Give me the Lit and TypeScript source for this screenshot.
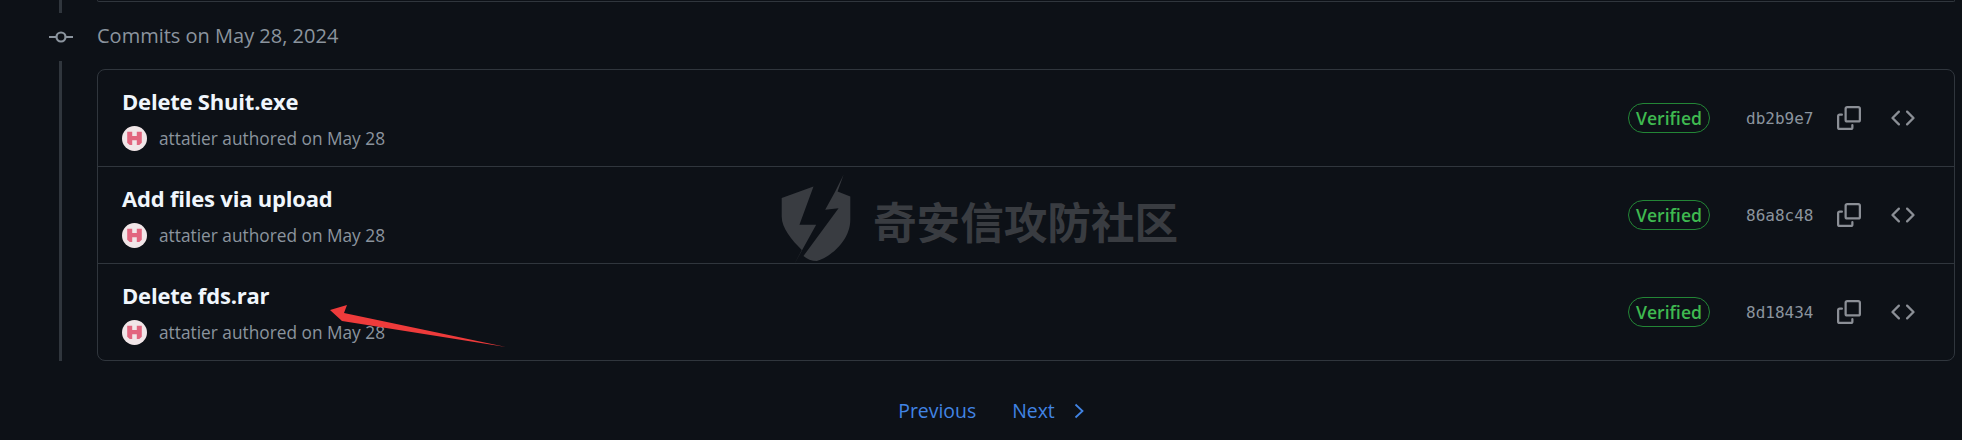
import { LitElement, html, css, svg } from "lit";
import { customElement } from "lit/decorators.js";

const commits = [
  { title: "Delete Shuit.exe", sha: "db2b9e7" },
  { title: "Add files via upload", sha: "86a8c48" },
  { title: "Delete fds.rar", sha: "8d18434" },
];

const avatar = html`<svg class="avatar" viewBox="0 0 24 24" width="25" height="25">
  <circle cx="12" cy="12" r="12" fill="#f1e6e8"/>
  <path d="M5 5.500h4.800v4h4.400v-4H19v10.500l-2.400 2.200h-2.400v-4.600H9.800v4.600H7.400L5 16z" fill="#e2667f"/>
</svg>`;

const copyIcon = html`<svg class="ic" viewBox="0 0 16 16" width="24" height="24" fill="#8b8f96">
  <path d="M0 6.750C0 5.784.784 5 1.750 5h1.500a.75.75 0 0 1 0 1.500h-1.500a.25.25 0 0 0-.25.25v7.500c0 .138.112.25.25.25h7.500a.25.25 0 0 0 .25-.25v-1.500a.75.75 0 0 1 1.500 0v1.500A1.750 1.750 0 0 1 9.250 16h-7.500A1.750 1.750 0 0 1 0 14.250Z"/>
  <path d="M5 1.750C5 .784 5.784 0 6.750 0h7.500C15.216 0 16 .784 16 1.750v7.500A1.750 1.750 0 0 1 14.250 11h-7.500A1.750 1.750 0 0 1 5 9.250Zm1.750-.25a.25.25 0 0 0-.25.25v7.500c0 .138.112.25.25.25h7.500a.25.25 0 0 0 .25-.25v-7.500a.25.25 0 0 0-.25-.25Z"/>
</svg>`;

const codeIcon = html`<svg class="ic" viewBox="0 0 16 16" width="24" height="24" fill="#8b8f96">
  <path d="m11.280 3.220 4.250 4.250a.75.75 0 0 1 0 1.060l-4.250 4.250a.749.749 0 0 1-1.275-.326.749.749 0 0 1 .215-.734L13.940 8l-3.720-3.720a.749.749 0 0 1 .326-1.275.749.749 0 0 1 .734.215Zm-6.560 0a.751.751 0 0 1 1.042.018.751.751 0 0 1 .018 1.042L2.060 8l3.720 3.720a.749.749 0 0 1-.326 1.275.749.749 0 0 1-.734-.215L.470 8.530a.75.75 0 0 1 0-1.060Z"/>
</svg>`;

@customElement("app-root")
export class AppRoot extends LitElement {
  static styles = css`
    :host {
      display: block;
      width: 1962px;
      height: 440px;
      background: #0d1117;
      font-family: "Open Sans", "Noto Sans", sans-serif;
      position: relative;
      overflow: hidden;
    }
    .timeline {
      display: grid;
      grid-template-columns: 59px 3px 35px 1fr;
      grid-template-rows: 13px 48px 8px 292px;
      margin-right: 7px;
    }
    .prev-box {
      grid-column: 4;
      grid-row: 1;
      height: 1px;
      border: 1px solid #30363d;
      border-top: none;
      border-radius: 0 0 6px 6px;
    }
    .line {
      grid-column: 2;
      background: #30363d;
    }
    .l1 { grid-row: 1; }
    .l2 { grid-row: 3 / 5; }
    .head {
      grid-column: 1 / 5;
      grid-row: 2;
      display: flex;
      align-items: center;
    }
    .node {
      width: 97px;
      flex: none;
      box-sizing: border-box;
      padding-left: 49px;
    }
    .node svg { display: block; }
    .date {
      font-size: 20px;
      line-height: 26px;
      padding-bottom: 2px;
      color: #8b949e;
    }
    .box {
      grid-column: 4;
      grid-row: 4;
      border: 1px solid #30363d;
      border-radius: 8px;
      display: flex;
      flex-direction: column;
    }
    .row {
      flex: 1;
      display: flex;
      align-items: center;
      justify-content: space-between;
      padding: 0 39px 0 24px;
      border-top: 1px solid #30363d;
    }
    .row:first-child { border-top: none; }
    .info { padding-top: 3px; }
    .title {
      font-size: 22px;
      font-weight: 700;
      color: #f0f6fc;
      line-height: 27px;
      letter-spacing: -0.2px;
    }
    .meta {
      display: flex;
      align-items: center;
      gap: 12px;
      margin-top: 11px;
      font-size: 17.300px;
      color: #8b949e;
      line-height: 25px;
    }
    .avatar { display: block; flex: none; }
    .right { display: flex; align-items: center; }
    .badge {
      box-sizing: border-box;
      width: 82px;
      height: 30px;
      border: 1px solid #238636;
      border-radius: 15px;
      color: #3fb950;
      font-size: 17.600px;
      font-weight: 600;
      display: flex;
      align-items: center;
      justify-content: center;
    }
    .sha {
      font-family: "DejaVu Sans Mono", "Liberation Mono", monospace;
      font-size: 16px;
      color: #8b949e;
      width: 68px;
      margin-left: 36px;
      white-space: nowrap;
    }
    .ic { display: block; flex: none; }
    .copy { margin-left: 23px; }
    .code { margin-left: 30px; }
    .pager {
      display: flex;
      justify-content: center;
      align-items: center;
      margin-top: 35px;
      padding-left: 20px;
      font-size: 19.400px;
      color: #4184e4;
      line-height: 30px;
    }
    .next { margin-left: 36px; }
    .chev { margin-left: 19px; display: block; }
    .wm {
      position: absolute;
      left: 780px;
      top: 173px;
      display: flex;
      align-items: center;
      gap: 21px;
      pointer-events: none;
    }
    .shield { display: block; }
    .wm-text {
      font-family: "Noto Sans CJK SC", sans-serif;
      font-size: 43.600px;
      font-weight: 700;
      line-height: 60px;
      color: #393c41;
      white-space: nowrap;
      margin-top: 2px;
    }
    .arrow {
      position: absolute;
      left: 325px;
      top: 300px;
      pointer-events: none;
    }
  `;

  render() {
    return html`
      <div class="timeline">
        <div class="prev-box"></div>
        <div class="line l1"></div>
        <div class="head">
          <div class="node">
            <svg viewBox="0 0 24 24" width="24" height="24" fill="none" stroke="#8b949e" stroke-width="2.200">
              <circle cx="12" cy="12" r="4.500"/>
              <path d="M0 12h7.500M16.500 12H24"/>
            </svg>
          </div>
          <div class="date">Commits on May 28, 2024</div>
        </div>
        <div class="line l2"></div>
        <div class="box">
          ${commits.map(
            (c) => html`<div class="row">
              <div class="info">
                <div class="title">${c.title}</div>
                <div class="meta">${avatar}<span>attatier authored on May 28</span></div>
              </div>
              <div class="right">
                <div class="badge">Verified</div>
                <div class="sha">${c.sha}</div>
                <div class="copy">${copyIcon}</div>
                <div class="code">${codeIcon}</div>
              </div>
            </div>`
          )}
        </div>
      </div>
      <div class="pager">
        <span>Previous</span>
        <span class="next">Next</span>
        <svg class="chev" viewBox="0 0 10 16" width="10" height="16" fill="none" stroke="#4184e4" stroke-width="1.800">
          <path d="M1.500 1.500 8.500 8l-7 6.500"/>
        </svg>
      </div>
      <div class="wm">
        <svg class="shield" viewBox="60 40 215 275" width="72" height="92" fill="#393c41">
          ${svg`<path d="M65 115 160 80 118 195 168 195 103 312 125 270C95 240 65 205 65 170Z"/>
          <path d="M250 45 232 95 270 110 270 180C270 240 215 290 170 303 155 303 140 297 130 288L235 145 195 150 225 95Z"/>`}
        </svg>
        <div class="wm-text">奇安信攻防社区</div>
      </div>
      <svg class="arrow" width="190" height="55" viewBox="0 0 190 55">
        <polygon points="5,10 22,5 19,13 181,47 17,21" fill="#ee3b3b"/>
      </svg>
    `;
  }
}
